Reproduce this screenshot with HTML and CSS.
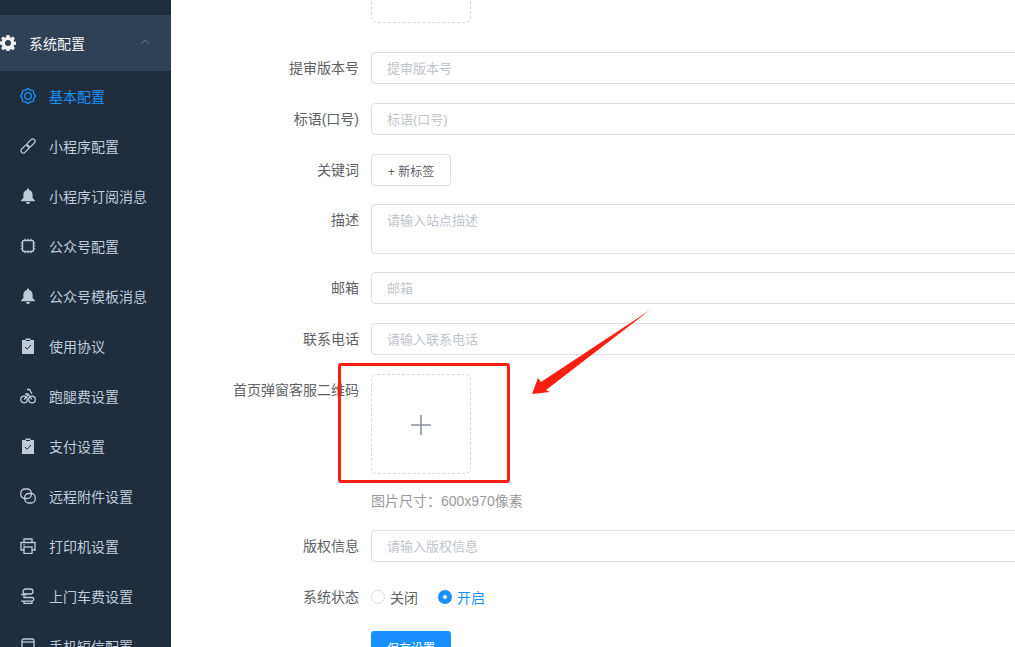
FILE: index.html
```html
<!DOCTYPE html>
<html lang="zh-CN">
<head>
<meta charset="utf-8">
<title>系统配置</title>
<link rel="stylesheet" href="styles.css">
</head>
<body>
<div class="app">
  <aside class="sidebar">
    <div class="menu-title">
      <svg class="gear" viewBox="0 0 16 16"><path fill-rule="evenodd" d="M6.600 0h2.800l.4 2.200 1.200.5L12.900 1.400l2 2-1.300 1.900.5 1.200 2.100.4v2.800l-2.100.4-.5 1.200 1.300 1.900-2 2-1.900-1.300-1.200.5-.4 2.100H6.600l-.4-2.100-1.200-.5-1.900 1.300-2-2 1.300-1.900-.5-1.200L-.2 9.400V6.600l2.100-.4.5-1.200L1.100 3.400l2-2L5 2.700l1.200-.5zM8 5a3 3 0 1 0 0 6 3 3 0 0 0 0-6z"/></svg>
      <span class="title-text">系统配置</span>
      <svg class="chev" viewBox="0 0 10 6"><path d="M1 5l4-4 4 4" fill="none" stroke="currentColor" stroke-width="1"/></svg>
    </div>
    <a class="item active">
      <svg class="ico" viewBox="0 0 16 16"><path d="M15.600 8L13.820 10.410 13.370 13.370 10.410 13.820 8 15.600 5.590 13.820 2.630 13.370 2.180 10.410 .4 8 2.180 5.590 2.630 2.630 5.590 2.180 8 .4 10.410 2.180 13.370 2.630 13.820 5.590z" fill="none" stroke="currentColor" stroke-width="1.300" stroke-linejoin="round"/><circle cx="8" cy="8" r="3.300" fill="none" stroke="currentColor" stroke-width="1.300"/></svg>
      <span>基本配置</span>
    </a>
    <a class="item">
      <svg class="ico" viewBox="0 0 16 16"><g transform="rotate(-45 8 8)" fill="none" stroke="currentColor" stroke-width="1.300"><rect x="-1" y="5.700" width="9.500" height="4.600" rx="2.300"/><rect x="7.500" y="5.700" width="9.500" height="4.600" rx="2.300"/></g></svg>
      <span>小程序配置</span>
    </a>
    <a class="item">
      <svg class="ico" viewBox="0 0 16 16"><path fill="currentColor" d="M8 .5c.6 0 1 .4 1 1v.600c2.300.5 3.600 2.300 3.600 4.600v3.300L15 12.500v.8H1v-.8l2.400-2.500V6.700c0-2.300 1.300-4.100 3.600-4.600v-.6c0-.6.400-1 1-1zM6 14h4a2 2 0 0 1-4 0z"/></svg>
      <span>小程序订阅消息</span>
    </a>
    <a class="item">
      <svg class="ico" viewBox="0 0 16 16"><rect x="2.500" y="2.500" width="11" height="11" rx="1.500" fill="none" stroke="currentColor" stroke-width="1.500"/><path d="M5 .7v2M8 .7v2M11 .7v2M5 13.300v2M8 13.300v2M11 13.300v2M.7 5h2M.7 8h2M.7 11h2M13.300 5h2M13.300 8h2M13.300 11h2" stroke="currentColor" stroke-width="1.200"/></svg>
      <span>公众号配置</span>
    </a>
    <a class="item">
      <svg class="ico" viewBox="0 0 16 16"><path fill="currentColor" d="M8 .5c.6 0 1 .4 1 1v.600c2.300.5 3.600 2.300 3.600 4.600v3.300L15 12.500v.8H1v-.8l2.400-2.500V6.700c0-2.300 1.300-4.100 3.600-4.600v-.6c0-.6.400-1 1-1zM6 14h4a2 2 0 0 1-4 0z"/></svg>
      <span>公众号模板消息</span>
    </a>
    <a class="item">
      <svg class="ico" viewBox="0 0 16 16"><path fill="currentColor" d="M5.500 .5h5V2H14v14H2V2h3.500z"/><path d="M5 9l2.200 2.200L11 7" fill="none" stroke="#1f2d3d" stroke-width="1"/><path d="M6 2.500h4" stroke="#1f2d3d" stroke-width="1"/></svg>
      <span>使用协议</span>
    </a>
    <a class="item">
      <svg class="ico" viewBox="0 0 16 16"><g fill="none" stroke="currentColor" stroke-width="1.300"><circle cx="4" cy="11.500" r="3.300"/><circle cx="12" cy="11.500" r="3.300"/><path d="M4 11.500L8.500 6.500l3.500 5M5 6h3.500M7 1.500h2.500l2.500 4.500"/></g></svg>
      <span>跑腿费设置</span>
    </a>
    <a class="item">
      <svg class="ico" viewBox="0 0 16 16"><path fill="currentColor" d="M5.500 .5h5V2H14v14H2V2h3.500z"/><path d="M5 9l2.200 2.200L11 7" fill="none" stroke="#1f2d3d" stroke-width="1"/><path d="M6 2.500h4" stroke="#1f2d3d" stroke-width="1"/></svg>
      <span>支付设置</span>
    </a>
    <a class="item">
      <svg class="ico" viewBox="0 0 16 16"><g fill="none" stroke="currentColor" stroke-width="1.300"><rect x=".8" y="1" width="10.500" height="9.500" rx="4"/><rect x="4.700" y="5.500" width="10.500" height="9.500" rx="4"/></g></svg>
      <span>远程附件设置</span>
    </a>
    <a class="item">
      <svg class="ico" viewBox="0 0 16 16"><g fill="none" stroke="currentColor" stroke-width="1.300"><path d="M4 4.500V1h8v3.500M4 12H1V4.500h14V12h-3"/><rect x="4" y="9" width="8" height="6.500"/></g><path d="M3 7h2" stroke="currentColor"/></svg>
      <span>打印机设置</span>
    </a>
    <a class="item">
      <svg class="ico" viewBox="0 0 16 16"><g fill="none" stroke="currentColor" stroke-width="1.300"><rect x="3" y="1" width="10" height="5" rx="2.500"/><path d="M1 6.500h6M4 6v3.500h8a1.800 1.800 0 0 1 0 3.600H1M12 13v2.500H4V13"/></g></svg>
      <span>上门车费设置</span>
    </a>
    <a class="item">
      <svg class="ico" viewBox="0 0 16 16"><g fill="none" stroke="currentColor" stroke-width="1.300"><rect x="2" y="1" width="12" height="14" rx="1.500"/><path d="M2 4h12"/></g></svg>
      <span>手机短信配置</span>
    </a>
  </aside>

  <main class="main">
    <form class="form">
      <div class="row gap-29">
        <span class="label"></span>
        <div class="upload"></div>
      </div>
      <div class="row gap-19">
        <label class="label">提审版本号</label>
        <input class="input" placeholder="提审版本号">
      </div>
      <div class="row gap-19">
        <label class="label">标语(口号)</label>
        <input class="input" placeholder="标语(口号)">
      </div>
      <div class="row gap-18">
        <label class="label">关键词</label>
        <button type="button" class="tag-btn">+ 新标签</button>
      </div>
      <div class="row gap-18">
        <label class="label">描述</label>
        <textarea class="input area" placeholder="请输入站点描述"></textarea>
      </div>
      <div class="row gap-19">
        <label class="label">邮箱</label>
        <input class="input" placeholder="邮箱">
      </div>
      <div class="row gap-19">
        <label class="label">联系电话</label>
        <input class="input" placeholder="请输入联系电话">
      </div>
      <div class="row">
        <label class="label">首页弹窗客服二维码</label>
        <div class="upload">
          <svg class="plus" viewBox="0 0 20 20"><path d="M10 0v20M0 10h20" stroke="#8c939d" stroke-width="1.600"/></svg>
        </div>
      </div>
      <p class="hint">图片尺寸：600x970像素</p>
      <div class="row gap-19">
        <label class="label">版权信息</label>
        <input class="input" placeholder="请输入版权信息">
      </div>
      <div class="row radio-row">
        <label class="label">系统状态</label>
        <div class="radios">
          <span class="radio"><i class="dot"></i>关闭</span>
          <span class="radio on"><i class="dot"></i>开启</span>
        </div>
      </div>
      <div class="row">
        <span class="label"></span>
        <button type="button" class="save">保存设置</button>
      </div>
    </form>
    <div class="mark-box"></div>
    <svg class="mark-arrow" viewBox="530 308 122 88"><polygon fill="#fb1f13" points="650,310 541,382 538,378 532,394 550,392 546,390"/></svg>
  </main>
</div>
</body>
</html>
```
FILE: styles.css
```css
* { box-sizing: border-box; }
html, body { margin: 0; height: 100%; overflow: hidden; background: #fff; }
body { font-family: "Liberation Sans", "Noto Sans CJK SC", sans-serif; font-size: 14px; color: #606266; }
.app { display: flex; width: 1015px; height: 647px; overflow: hidden; }

.sidebar { width: 171px; flex: none; background: #1f2d3d; padding-top: 15px; color: #bfcbd9; overflow: hidden; }
.menu-title { height: 56px; background: #304156; display: flex; align-items: center; color: #f4f4f5; }
.gear { width: 16px; height: 16px; fill: #f4f4f5; flex: none; }
.title-text { margin-left: 13px; }
.chev { width: 10px; height: 6px; margin-left: 55px; color: #6b7686; position: relative; top: -1px; }
.item { height: 50px; display: flex; align-items: center; padding-left: 20px; }
.item span { margin-left: 13px; white-space: nowrap; }
.item.active { color: #1890ff; }
.ico { width: 16px; height: 16px; flex: none; }

.main { flex: 1; position: relative; overflow: hidden; }
.form { margin-top: -77px; }
.row { display: flex; align-items: flex-start; }
.gap-19 { margin-bottom: 19px; }
.gap-18 { margin-bottom: 18px; }
.gap-29 { margin-bottom: 29px; }
.label { width: 188px; flex: none; margin-right: 12px; text-align: right; line-height: 32px; white-space: nowrap; display: block; }
.input { width: 760px; height: 32px; flex: none; border: 1px solid #dcdfe6; border-radius: 4px; padding: 0 15px; font: 13px "Liberation Sans", "Noto Sans CJK SC", sans-serif; color: #606266; background: #fff; outline: none; display: block; }
.input::placeholder { color: #c0c4cc; opacity: 1; }
.area { height: 50px; padding: 5px 15px; line-height: 22px; resize: none; }
.tag-btn { width: 80px; height: 32px; border: 1px solid #dcdfe6; border-radius: 4px; background: #fff; color: #606266; font: 12px "Liberation Sans", "Noto Sans CJK SC", sans-serif; padding: 0; }
.upload { width: 100px; height: 100px; flex: none; border: 1px dashed #d9d9d9; border-radius: 6px; display: flex; align-items: center; justify-content: center; padding-top: 2px; }
.plus { width: 20px; height: 20px; }
.hint { margin: 0 0 0 200px; height: 56px; padding-top: 16px; line-height: 22px; color: #999; }
.radio-row { height: 32px; margin-bottom: 18px; align-items: center; }
.radios { display: flex; align-items: center; }
.radio { display: flex; align-items: center; margin-right: 20px; color: #606266; }
.radio .dot { width: 14px; height: 14px; border: 1px solid #dcdfe6; border-radius: 50%; margin-right: 5px; background: #fff; display: block; }
.radio.on { color: #1890ff; }
.radio.on .dot { border: 5px solid #1890ff; }
.save { width: 80px; height: 32px; border: 0; border-radius: 3px; background: #1890ff; color: #fff; font: 12px "Liberation Sans", "Noto Sans CJK SC", sans-serif; padding: 0; }

.mark-box { position: absolute; left: 167px; top: 363px; width: 172px; height: 120px; border: 3px solid #fb1f13; border-radius: 3px; pointer-events: none; }
.mark-arrow { position: absolute; left: 359px; top: 308px; width: 122px; height: 88px; }
```
